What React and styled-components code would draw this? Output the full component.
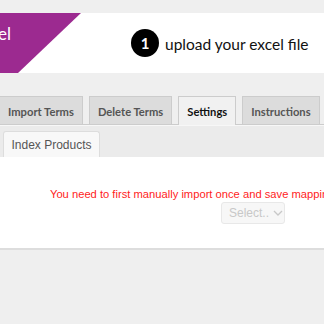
import React from "react";
import styled, { createGlobalStyle } from "styled-components";

const Global = createGlobalStyle`
  html, body { margin: 0; padding: 0; background: #f0f0f0; overflow: hidden; }
  body { font-family: "Liberation Sans", Arial, sans-serif; width: 324px; height: 324px; }
`;

const Page = styled.div`
  width: 324px;
  height: 324px;
  background: #efefef;
  padding-top: 13px;
  box-sizing: border-box;
  overflow: hidden;
`;

const Banner = styled.div`
  height: 60px;
  background: #fff;
  display: flex;
  align-items: center;
`;

const Brand = styled.div`
  align-self: stretch;
  width: 81px;
  background: #9c2a90;
  clip-path: polygon(0 0, 81px 0, 18px 100%, 0 100%);
  color: #fff;
  font-family: "Lato", sans-serif;
  font-size: 17px;
  line-height: 1;
  padding-top: 12px;
  box-sizing: border-box;
  text-indent: -2px;
`;

const Step = styled.div`
  margin-left: 50px;
  display: flex;
  align-items: center;
  gap: 6px;
`;

const StepNum = styled.span`
  width: 28px;
  height: 28px;
  border-radius: 50%;
  background: #000;
  color: #fff;
  display: flex;
  align-items: center;
  justify-content: center;
  font-family: "Lato", sans-serif;
  font-size: 15px;
  font-weight: 700;
`;

const StepText = styled.span`
  font-family: "Lato", sans-serif;
  font-size: 15.5px;
  color: #111;
  padding-top: 2px;
`;

const TabBar = styled.nav`
  margin-top: 23px;
  display: flex;
  gap: 6px;
  border-bottom: 1px solid #cccccc;
  height: 28px;
`;

const Tab = styled.div`
  box-sizing: border-box;
  padding: 1px 8px 0;
  display: flex;
  align-items: center;
  border: 1px solid #cccccc;
  border-bottom: none;
  background: ${(p) => (p.$active ? "#f1f1f1" : "#dcdcdc")};
  color: ${(p) => (p.$active ? "#111" : "#555")};
  font-family: "Lato", sans-serif;
  font-weight: 700;
  font-size: 11.2px;
  white-space: nowrap;
  margin-bottom: ${(p) => (p.$active ? "-1px" : "0")};
  height: ${(p) => (p.$active ? "29px" : "28px")};
  &:first-child { margin-left: -1px; }
`;

const SubBar = styled.div`
  height: 32px;
  background: #ebebeb;
  border-top: 1px solid #f7f7f7;
  box-sizing: border-box;
  display: flex;
  align-items: flex-end;
  padding-left: 3px;
`;

const SubTab = styled.div`
  height: 26px;
  width: 97px;
  box-sizing: border-box;
  background: #f8f8f8;
  border: 1px solid #dddddd;
  border-bottom: none;
  border-radius: 3px 3px 0 0;
  display: flex;
  align-items: center;
  justify-content: center;
  font-size: 12px;
  color: #555;
`;

const Content = styled.div`
  background: #fff;
  height: 93px;
  border-bottom: 2px solid #dddddd;
  padding-top: 30px;
  box-sizing: border-box;
  width: 324px;
`;

const Inner = styled.div`
  width: 506px;
  display: flex;
  flex-direction: column;
  align-items: center;
`;

const Warning = styled.div`
  color: #ff1c1c;
  font-size: 11.2px;
  line-height: 14px;
  white-space: nowrap;
`;

const Select = styled.div`
  margin-top: 1px;
  width: 64px;
  height: 22px;
  box-sizing: border-box;
  background: #f7f7f7;
  border: 1px solid #e8e8e8;
  border-radius: 3px;
  display: flex;
  align-items: center;
  padding-left: 7px;
  gap: 4px;
  color: #c8c8c8;
  font-size: 12px;
`;

export default function App() {
  return (
    <>
      <Global />
      <Page>
        <Banner>
          <Brand>el</Brand>
          <Step>
            <StepNum>1</StepNum>
            <StepText>upload your excel file</StepText>
          </Step>
        </Banner>
        <TabBar>
          <Tab>Import Terms</Tab>
          <Tab>Delete Terms</Tab>
          <Tab $active>Settings</Tab>
          <Tab>Instructions</Tab>
        </TabBar>
        <SubBar>
          <SubTab>Index Products</SubTab>
        </SubBar>
        <Content>
          <Inner>
            <Warning>You need to first manually import once and save mapping for this to work properly.</Warning>
            <Select>
              Select..
              <svg width="10" height="6" viewBox="0 0 10 6" fill="none">
                <path d="M1 1l4 4 4-4" stroke="#c8c8c8" strokeWidth="1.3" />
              </svg>
            </Select>
          </Inner>
        </Content>
      </Page>
    </>
  );
}
